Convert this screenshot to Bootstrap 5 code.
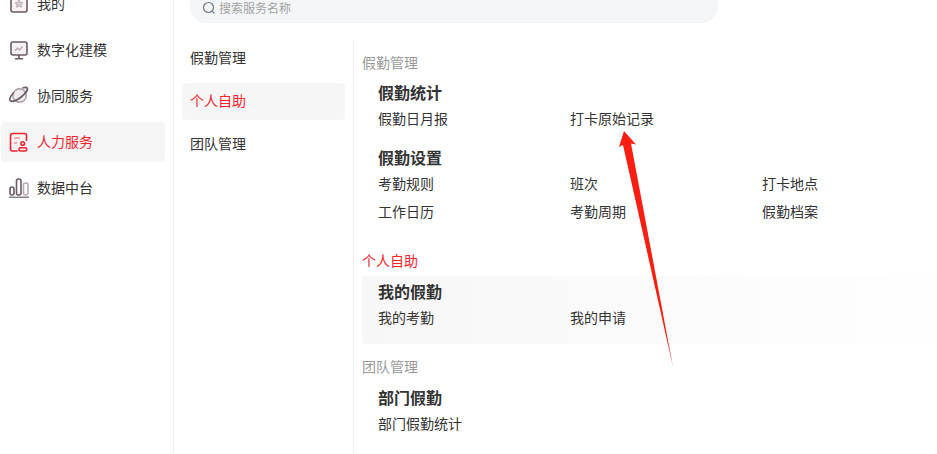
<!DOCTYPE html>
<html lang="zh-CN">
<head>
  <meta charset="UTF-8" />
  <meta name="viewport" content="width=device-width, initial-scale=1.0"/>
  <title>人力服务</title>
  <link href="https://cdn.jsdelivr.net/npm/bootstrap@5.3.0/dist/css/bootstrap.min.css" rel="stylesheet">
  <style>
    html, body { height: 454px; overflow: hidden; background: #fff; }
    body { font-family: "Noto Sans CJK SC", "Liberation Sans", sans-serif; font-size: 14px; color: #333; line-height: 20px; }
    .shell { width: 937px; height: 454px; overflow: hidden; position: relative; }
    .side-menu { width: 174px; border-right: 1px solid #efefef; padding: 0 8px 0 1px; margin-top: -16px; height: 470px; flex: none; }
    .side-item { height: 40px; margin-bottom: 6px; padding-left: 8px; gap: 8px; border-radius: 4px; }
    .side-item span { padding-bottom: 2px; }
    .side-item svg { width: 20px; height: 20px; flex: none; }
    .side-item.on { background: #f5f5f5; color: #f5222d; }
    .main-pane { min-width: 0; }
    .search-box { width: 528px; height: 31px; margin: -8px 0 17px 16px; padding-top: 1px; padding-left: 12px; gap: 3px; background: #f4f5f7; border-radius: 0 0 16px 16px; color: #a3a3a3; font-size: 12px; }
    .sub-menu { width: 179px; padding: 0 8px; flex: none; }
    .sub-item { height: 37px; margin-bottom: 6px; padding-left: 8px; padding-bottom: 3px; border-radius: 4px; }
    .sub-item.on { background: #f6f6f6; color: #f5222d; }
    .detail { border-left: 1px solid #efefef; padding: 12px 0 0 8px; height: 414px; }
    .group-name { color: #999; height: 20px; margin-bottom: 10px; }
    .group-name.on { color: #f5222d; margin-bottom: 6px; }
    .group-name.last { margin-bottom: 11px; }
    .group-box { padding: 0 16px; margin-bottom: 21px; }
    .group-box.on { background: linear-gradient(90deg, #f7f7f7, #ffffff); border-radius: 4px; height: 68px; padding-top: 5px; margin-bottom: 12px; }
    .group-title { font-size: 16px; font-weight: 700; height: 20px; margin-bottom: 6px; color: #333; }
    .link-grid { display: grid; grid-template-columns: repeat(3, 192px); grid-auto-rows: 28px; margin-bottom: 11px; }
    .arrow-mark { position: absolute; left: 0; top: 0; pointer-events: none; }
  </style>
</head>
<body>
  <div class="shell d-flex">
    <!-- left menu -->
    <div class="side-menu">
      <div class="side-item d-flex align-items-center">
        <svg viewBox="0 0 20 20" fill="none" stroke="#6b5a66" stroke-width="1.6"><rect x="2" y="2" width="16" height="16" rx="2" fill="#f6f2f4"/><path d="M10 6l1.200 2.500 2.600.3-1.900 1.800.5 2.600-2.400-1.300-2.400 1.300.5-2.600-1.900-1.800 2.600-.3z" stroke="#b9a9b3" stroke-width="1" fill="#d8ced4"/></svg>
        <span>我的</span>
      </div>
      <div class="side-item d-flex align-items-center">
        <svg viewBox="0 0 20 20" fill="none" stroke="#6b5a66" stroke-width="1.6"><rect x="2" y="2" width="16" height="13" rx="2" fill="#f6f2f4"/><path d="M10 15v3.500M6 18.800h8"/><path d="M6 11l2.500-3 2 2 3-3.500" stroke="#b9a9b3" stroke-width="1.400"/></svg>
        <span>数字化建模</span>
      </div>
      <div class="side-item d-flex align-items-center">
        <svg viewBox="0 0 20 20" fill="none" stroke="#6b5a66" stroke-width="1.700"><circle cx="10.500" cy="9.500" r="6.800" stroke="#a99aa3" stroke-width="1.400" fill="#eeeaed"/><path d="M5 6.500C2 9.500.2 13 1.200 14.500c1.400 2 6.500.2 11-3.500 4.500-3.700 7-7.500 6-9-.7-1-2.500-.8-4.700 0"/></svg>
        <span>协同服务</span>
      </div>
      <div class="side-item on d-flex align-items-center">
        <svg viewBox="0 0 20 20" fill="none" stroke="#f5222d" stroke-width="1.600"><path d="M8.500 19H3.500a2 2 0 0 1-2-2V3.500a2 2 0 0 1 2-2h12a2 2 0 0 1 2 2V9"/><path d="M5 6h6M5 11h3" stroke="#f98d92"/><circle cx="13.700" cy="11.500" r="1.800"/><rect x="10" y="15.700" width="7.700" height="3.300" rx="1.500"/></svg>
        <span>人力服务</span>
      </div>
      <div class="side-item d-flex align-items-center">
        <svg viewBox="0 0 20 20" fill="none" stroke="#6b5a66" stroke-width="1.600"><rect x="1" y="9" width="4" height="8" rx="2"/><rect x="7.500" y="1" width="4.500" height="16" rx="2"/><rect x="14.500" y="5" width="4.500" height="12" rx="2" stroke="#b9a9b3"/><path d="M0 19.300h20" stroke="#8f7f8a"/></svg>
        <span>数据中台</span>
      </div>
    </div>

    <div class="main-pane flex-grow-1">
      <div class="search-box d-flex align-items-center">
        <svg width="14" height="14" viewBox="0 0 14 14" fill="none" stroke="#6f7a86" stroke-width="1.200"><circle cx="6.500" cy="6.500" r="5"/><path d="M10.300 10.300l2.200 2.200"/></svg>
        <span>搜索服务名称</span>
      </div>
      <div class="d-flex">
        <div class="sub-menu">
          <div class="sub-item d-flex align-items-center">假勤管理</div>
          <div class="sub-item on d-flex align-items-center">个人自助</div>
          <div class="sub-item d-flex align-items-center">团队管理</div>
        </div>
        <div class="detail flex-grow-1">
          <div class="group-name">假勤管理</div>
          <div class="group-box">
            <div class="group-title">假勤统计</div>
            <div class="link-grid">
              <div>假勤日月报</div>
              <div>打卡原始记录</div>
            </div>
            <div class="group-title">假勤设置</div>
            <div class="link-grid">
              <div>考勤规则</div>
              <div>班次</div>
              <div>打卡地点</div>
              <div>工作日历</div>
              <div>考勤周期</div>
              <div>假勤档案</div>
            </div>
          </div>
          <div class="group-name on">个人自助</div>
          <div class="group-box on">
            <div class="group-title">我的假勤</div>
            <div class="link-grid">
              <div>我的考勤</div>
              <div>我的申请</div>
            </div>
          </div>
          <div class="group-name last">团队管理</div>
          <div class="group-box">
            <div class="group-title">部门假勤</div>
            <div class="link-grid">
              <div>部门假勤统计</div>
            </div>
          </div>
        </div>
      </div>
    </div>

    <!-- annotation arrow -->
    <svg class="arrow-mark" width="937" height="454" viewBox="0 0 937 454">
      <path d="M624 131L619 147L623 145L673 367L631 143.500L636 144.500Z" fill="#fa1e12"/>
    </svg>
  </div>
  <script src="https://cdn.jsdelivr.net/npm/bootstrap@5.3.0/dist/js/bootstrap.bundle.min.js"></script>
</body>
</html>
